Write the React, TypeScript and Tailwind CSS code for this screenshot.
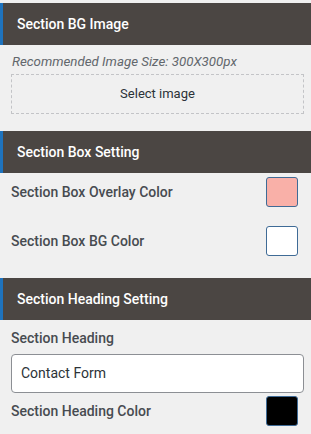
function SectionHeader({ title }: { title: string }) {
  return (
    <div className="flex h-[42px] items-center border-l-[3px] border-[#1e73be] bg-[#4b4643] pl-[14px]">
      <span className="text-[14px] font-medium text-white">{title}</span>
    </div>
  );
}

function Swatch({ color }: { color: string }) {
  return (
    <div
      className="h-[30px] w-[32px] rounded-[3px] border border-[#3f6b96]"
      style={{ backgroundColor: color }}
    />
  );
}

function ColorRow({ label, color }: { label: string; color: string }) {
  return (
    <div className="flex items-center justify-between pl-[11px] pr-[13px]">
      <span className="text-[14px] font-medium text-[#474b50]">{label}</span>
      <Swatch color={color} />
    </div>
  );
}

export default function App() {
  return (
    <div
      className="h-[434px] w-[311px] overflow-hidden bg-[#f0f0f0] pt-[3px]"
      style={{ fontFamily: "Roboto, 'Liberation Sans', sans-serif" }}
    >
      <SectionHeader title="Section BG Image" />
      <p className="mt-[7px] pl-[12px] text-[13.3px] leading-[19px] italic text-[#62676c]">
        Recommended Image Size: 300X300px
      </p>
      <div className="ml-[11px] mr-[7px] mt-[3px] flex h-[40px] items-center justify-center border border-dashed border-[#c3c4c7] text-[13px] text-[#2c3338]">
        Select image
      </div>

      <div className="mt-[17px]">
        <SectionHeader title="Section Box Setting" />
      </div>
      <div className="mt-[4px] flex flex-col gap-[19px]">
        <ColorRow label="Section Box Overlay Color" color="#f9b0a8" />
        <ColorRow label="Section Box BG Color" color="#ffffff" />
      </div>

      <div className="mt-[22px]">
        <SectionHeader title="Section Heading Setting" />
      </div>
      <p className="mt-[8px] pl-[11px] text-[14px] leading-[21px] font-medium text-[#474b50]">
        Section Heading
      </p>
      <div className="ml-[11px] mr-[7px] mt-[5px] flex h-[39px] items-center rounded-[4px] border border-[#8c8f94] bg-white pl-[9px] text-[14px] text-[#2c3338]">
        Contact Form
      </div>
      <div className="mt-[3px]">
        <ColorRow label="Section Heading Color" color="#000000" />
      </div>
    </div>
  );
}
